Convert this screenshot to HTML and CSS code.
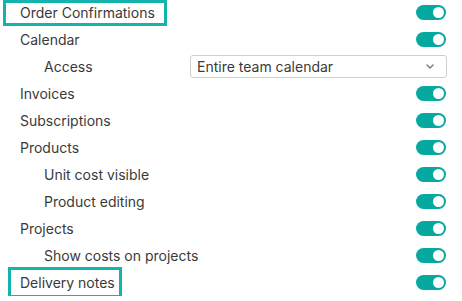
FILE: index.html
```html
<!DOCTYPE html>
<html>
<head>
<meta charset="utf-8">
<link rel="stylesheet" href="styles.css">
</head>
<body>
<div class="list">
  <div class="row">
    <span class="label">Order Confirmations</span>
    <span class="toggle"></span>
    <span class="hl hl-order"></span>
  </div>
  <div class="row">
    <span class="label">Calendar</span>
    <span class="toggle"></span>
  </div>
  <div class="row sub">
    <span class="label">Access</span>
    <div class="select">
      <span>Entire team calendar</span>
      <svg class="chev" width="8" height="5" viewBox="0 0 8 5"><path d="M1 1 L4 4 L7 1" fill="none" stroke="#777" stroke-width="1.4" stroke-linecap="round" stroke-linejoin="round"/></svg>
    </div>
  </div>
  <div class="row">
    <span class="label">Invoices</span>
    <span class="toggle"></span>
  </div>
  <div class="row">
    <span class="label">Subscriptions</span>
    <span class="toggle"></span>
  </div>
  <div class="row">
    <span class="label">Products</span>
    <span class="toggle"></span>
  </div>
  <div class="row sub">
    <span class="label">Unit cost visible</span>
    <span class="toggle"></span>
  </div>
  <div class="row sub">
    <span class="label">Product editing</span>
    <span class="toggle"></span>
  </div>
  <div class="row">
    <span class="label">Projects</span>
    <span class="toggle"></span>
  </div>
  <div class="row sub">
    <span class="label">Show costs on projects</span>
    <span class="toggle"></span>
  </div>
  <div class="row">
    <span class="label">Delivery notes</span>
    <span class="toggle"></span>
    <span class="hl hl-delivery"></span>
  </div>
</div>
</body>
</html>
```

FILE: styles.css
```css
html, body {
  margin: 0;
  padding: 0;
  background: #ffffff;
}
body {
  font-family: "Inter", "Noto Sans", sans-serif;
  font-size: 14px;
  color: #3a3a3a;
}
.list {
  display: flex;
  flex-direction: column;
  margin-top: -1px;
}
.row {
  position: relative;
  height: 27px;
  display: flex;
  align-items: center;
  justify-content: space-between;
  padding: 0 16px 0 20px;
}
.row.sub {
  padding-left: 44px;
}
.label {
  line-height: 17px;
}
.toggle {
  position: relative;
  width: 30px;
  height: 15px;
  border-radius: 8px;
  background: #05a9a0;
  margin-top: -1px;
}
.toggle::after {
  content: "";
  position: absolute;
  right: 2px;
  top: 2px;
  width: 11px;
  height: 11px;
  border-radius: 50%;
  background: #ffffff;
}
.select {
  width: 257px;
  height: 23px;
  box-sizing: border-box;
  border: 1px solid #cfcfcf;
  border-radius: 3px;
  display: flex;
  align-items: center;
  justify-content: space-between;
  padding: 0 12px 0 6px;
  margin-right: -1px;
}
.chev {
  display: block;
}
.hl {
  position: absolute;
  border: 3px solid #14b3ac;
  pointer-events: none;
}
.hl-order {
  left: 3px;
  top: 1px;
  width: 158px;
  height: 20px;
}
.hl-delivery {
  left: 8px;
  top: -2px;
  width: 108px;
  height: 25px;
}
```
